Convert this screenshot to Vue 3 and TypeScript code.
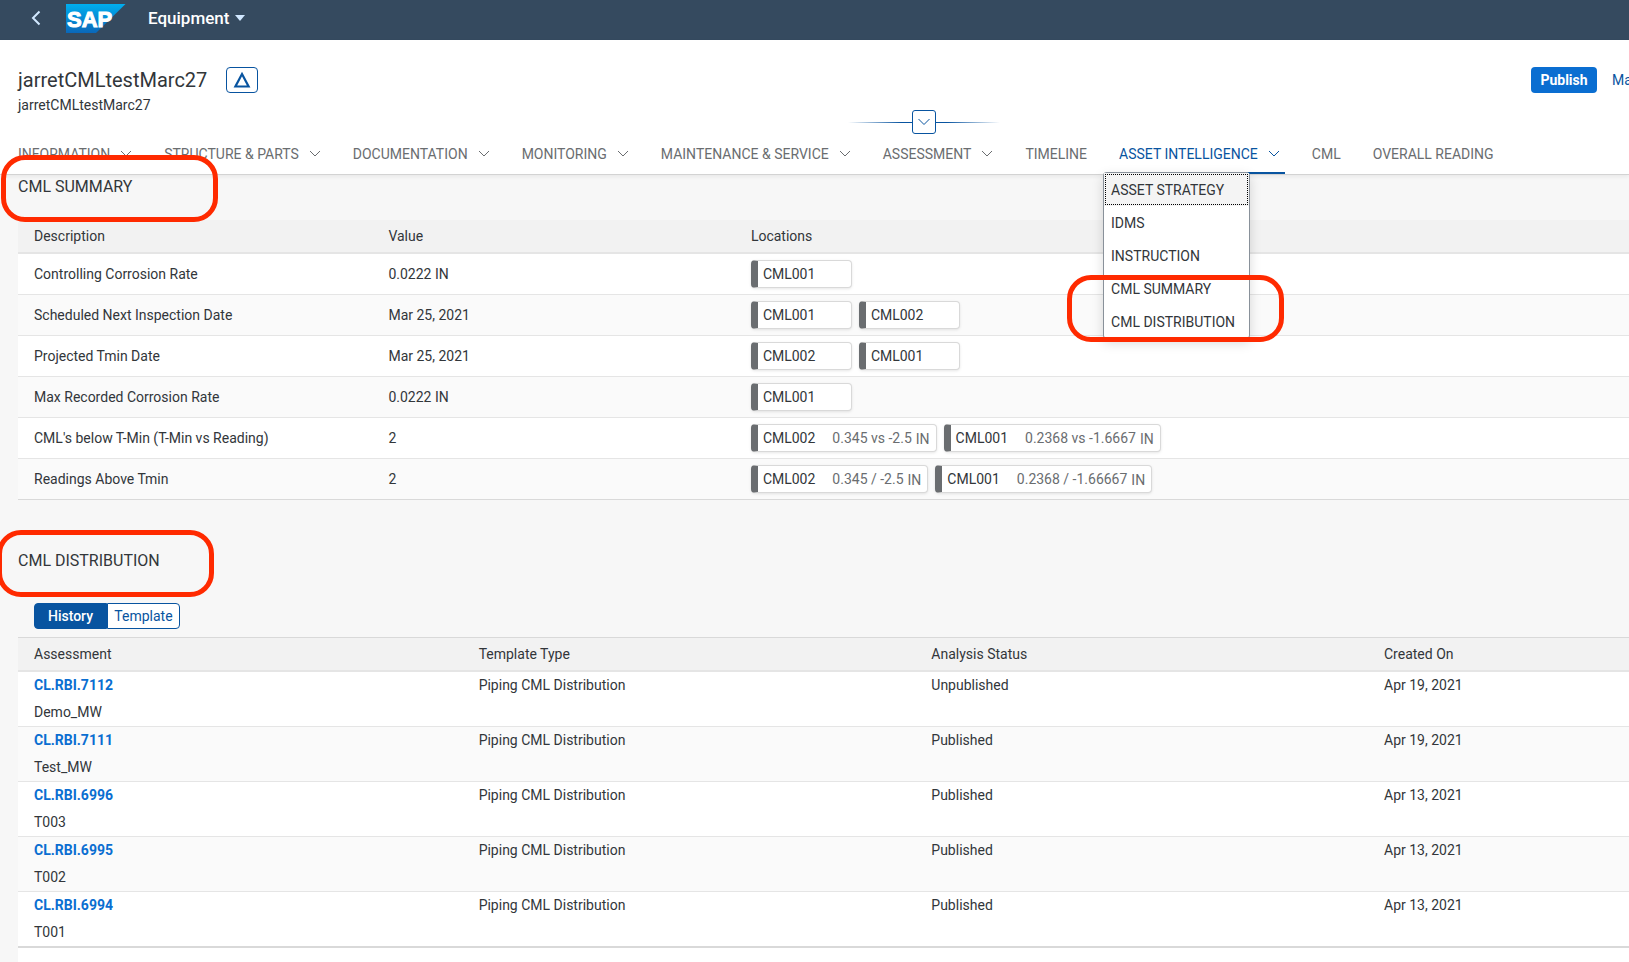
<script setup lang="ts">
import { ref } from 'vue'

interface Tab { label: string; menu?: boolean; active?: boolean }
interface Tag { id: string; detail?: string; unit?: string }
interface SummaryRow { description: string; value: string; tags: Tag[] }
interface Assessment { id: string; name: string; status: string; created: string }

const tabs: Tab[] = [
  { label: 'INFORMATION', menu: true },
  { label: 'STRUCTURE & PARTS', menu: true },
  { label: 'DOCUMENTATION', menu: true },
  { label: 'MONITORING', menu: true },
  { label: 'MAINTENANCE & SERVICE', menu: true },
  { label: 'ASSESSMENT', menu: true },
  { label: 'TIMELINE' },
  { label: 'ASSET INTELLIGENCE', menu: true, active: true },
  { label: 'CML' },
  { label: 'OVERALL READING' },
]

const menuItems: string[] = ['ASSET STRATEGY', 'IDMS', 'INSTRUCTION', 'CML SUMMARY', 'CML DISTRIBUTION']

const summary: SummaryRow[] = [
  { description: 'Controlling Corrosion Rate', value: '0.0222 IN', tags: [{ id: 'CML001' }] },
  { description: 'Scheduled Next Inspection Date', value: 'Mar 25, 2021', tags: [{ id: 'CML001' }, { id: 'CML002' }] },
  { description: 'Projected Tmin Date', value: 'Mar 25, 2021', tags: [{ id: 'CML002' }, { id: 'CML001' }] },
  { description: 'Max Recorded Corrosion Rate', value: '0.0222 IN', tags: [{ id: 'CML001' }] },
  {
    description: "CML's below T-Min (T-Min vs Reading)", value: '2',
    tags: [{ id: 'CML002', detail: '0.345 vs -2.5', unit: 'IN' }, { id: 'CML001', detail: '0.2368 vs -1.6667', unit: 'IN' }],
  },
  {
    description: 'Readings Above Tmin', value: '2',
    tags: [{ id: 'CML002', detail: '0.345 / -2.5', unit: 'IN' }, { id: 'CML001', detail: '0.2368 / -1.66667', unit: 'IN' }],
  },
]

const assessments: Assessment[] = [
  { id: 'CL.RBI.7112', name: 'Demo_MW', status: 'Unpublished', created: 'Apr 19, 2021' },
  { id: 'CL.RBI.7111', name: 'Test_MW', status: 'Published', created: 'Apr 19, 2021' },
  { id: 'CL.RBI.6996', name: 'T003', status: 'Published', created: 'Apr 13, 2021' },
  { id: 'CL.RBI.6995', name: 'T002', status: 'Published', created: 'Apr 13, 2021' },
  { id: 'CL.RBI.6994', name: 'T001', status: 'Published', created: 'Apr 13, 2021' },
]

const view = ref<'History' | 'Template'>('History')
</script>

<template>
  <div class="page">
    <header class="shell">
      <button class="back" type="button" aria-label="Back">
        <svg width="10" height="16" viewBox="0 0 10 16"><path d="M8.500 1.500 2 8l6.500 6.500" fill="none" stroke="#d1e8ff" stroke-width="2" /></svg>
      </button>
      <svg class="logo" width="60" height="30" viewBox="0 0 60 30" role="img" aria-label="SAP">
        <defs>
          <linearGradient id="logo-fill" x1="0" y1="0" x2="0" y2="1">
            <stop offset="0" stop-color="#00aeef" />
            <stop offset="1" stop-color="#0a67b9" />
          </linearGradient>
        </defs>
        <path d="M0 1h59.500L30 30H0z" fill="url(#logo-fill)" />
        <text x="1" y="24" class="logo-text">SAP</text>
      </svg>
      <button class="app-title" type="button">
        Equipment
        <svg width="10" height="6" viewBox="0 0 10 6"><path d="M0 0h10L5 6z" fill="#d1e8ff" /></svg>
      </button>
    </header>

    <section class="object-header">
      <div class="title-row">
        <h1>jarretCMLtestMarc27</h1>
        <button class="alert" type="button" aria-label="Alerts">
          <svg width="18" height="18" viewBox="0 0 18 18"><path d="M9 3 15.600 15.500H2.400z" fill="none" stroke="#0854a0" stroke-width="2.200" /></svg>
        </button>
        <div class="actions">
          <button class="publish" type="button">Publish</button>
          <button class="more" type="button">Ma</button>
        </div>
      </div>
      <p class="subtitle">jarretCMLtestMarc27</p>

      <div class="expander">
        <button type="button" aria-label="Expand header">
          <svg width="14" height="8" viewBox="0 0 14 8"><path d="M1.500 1 7 6.500 12.500 1" fill="none" stroke="#0854a0" /></svg>
        </button>
      </div>

      <nav class="tabs">
        <div v-for="tab in tabs" :key="tab.label" class="tab" :class="{ active: tab.active }">
          <button type="button">
            {{ tab.label }}
            <svg v-if="tab.menu" width="12" height="8" viewBox="0 0 12 8"><path d="M1 1l5 5 5-5" fill="none" stroke="currentColor" /></svg>
          </button>
          <div v-if="tab.active" class="menu">
            <button v-for="item in menuItems" :key="item" type="button">{{ item }}</button>
            <span class="mark mark-menu"></span>
          </div>
        </div>
      </nav>
    </section>

    <main>
      <section class="summary">
        <h2>CML SUMMARY<span class="mark mark-summary"></span></h2>
        <table>
          <thead>
            <tr><th class="s-desc">Description</th><th class="s-value">Value</th><th>Locations</th></tr>
          </thead>
          <tbody>
            <tr v-for="row in summary" :key="row.description">
              <td>{{ row.description }}</td>
              <td>{{ row.value }}</td>
              <td>
                <div class="tags">
                  <span v-for="tag in row.tags" :key="tag.id" class="tag">
                    <span>{{ tag.id }}</span>
                    <span v-if="tag.detail" class="detail">{{ tag.detail }}</span>
                    <span v-if="tag.unit" class="unit">{{ tag.unit }}</span>
                  </span>
                </div>
              </td>
            </tr>
          </tbody>
        </table>
      </section>

      <section class="distribution">
        <h2>CML DISTRIBUTION<span class="mark mark-distribution"></span></h2>
        <div class="segments">
          <button type="button" :class="{ on: view === 'History' }" @click="view = 'History'">History</button>
          <button type="button" :class="{ on: view === 'Template' }" @click="view = 'Template'">Template</button>
        </div>
        <table>
          <thead>
            <tr><th class="d-name">Assessment</th><th class="d-col">Template Type</th><th class="d-col">Analysis Status</th><th>Created On</th></tr>
          </thead>
          <tbody>
            <tr v-for="item in assessments" :key="item.id">
              <td><a href="#">{{ item.id }}</a><div class="name">{{ item.name }}</div></td>
              <td>Piping CML Distribution</td>
              <td>{{ item.status }}</td>
              <td>{{ item.created }}</td>
            </tr>
          </tbody>
        </table>
        <div class="rest"></div>
      </section>
    </main>
  </div>
</template>

<style>
body {
  background: #f7f7f7;
}
</style>

<style scoped>
.page {
  display: flex;
  flex-direction: column;
  min-height: 100vh;
  overflow: hidden;
  background: #f7f7f7;
  color: #32363a;
  font: 14px/20px Roboto, "Liberation Sans", sans-serif;
}
button {
  margin: 0;
  padding: 0;
  border: 0;
  background: none;
  color: inherit;
  font: inherit;
  cursor: pointer;
  white-space: nowrap;
}
svg {
  display: block;
  flex: none;
}
h1, h2, p {
  margin: 0;
  font-weight: 400;
}

.shell {
  display: flex;
  flex: none;
  align-items: center;
  box-sizing: border-box;
  height: 40px;
  padding: 0 0 4px 31px;
  background: #354a5f;
}
.logo {
  margin: 0 22px 0 25px;
}
.logo-text {
  fill: #fff;
  stroke: #fff;
  stroke-width: 1px;
  font: 700 22px "Liberation Sans", sans-serif;
}
.app-title {
  display: flex;
  align-items: center;
  gap: 6px;
  color: #fff;
  font-size: 17px;
  font-weight: 500;
}

.object-header {
  position: relative;
  z-index: 2;
  flex: none;
  padding: 27px 0 0 18px;
  background: #fff;
  border-bottom: 1px solid #d3d3d3;
  box-shadow: 0 2px 4px rgba(0, 0, 0, 0.06);
}
.title-row {
  display: flex;
  align-items: center;
  height: 26px;
}
h1 {
  font-size: 20px;
  line-height: 26px;
}
.alert {
  display: grid;
  place-items: center;
  width: 32px;
  height: 26px;
  margin-left: 19px;
  border: 1px solid #0854a0;
  border-radius: 4px;
}
.actions {
  display: flex;
  gap: 15px;
  margin-left: auto;
}
.publish {
  width: 66px;
  height: 26px;
  border-radius: 4px;
  background: #0a6ed1;
  color: #fff;
  font-weight: 700;
}
.more {
  width: 17px;
  color: #0854a0;
  text-align: left;
}
.subtitle {
  margin-top: 2px;
}
.expander {
  position: absolute;
  top: 70px;
  left: calc(56.700% - 76px);
  display: flex;
  justify-content: center;
  width: 152px;
  background: linear-gradient(90deg, transparent, #0854a0 35%, #0854a0 65%, transparent) center / 100% 1px no-repeat;
}
.expander button {
  display: grid;
  place-items: center;
  width: 24px;
  height: 24px;
  border: 1px solid #0854a0;
  border-radius: 3px;
  background: #fff;
}
.tabs {
  display: flex;
  gap: 32px;
  margin-top: 23px;
  color: #6a6d70;
}
.tab {
  position: relative;
  height: 36px;
}
.tab > button {
  display: flex;
  align-items: center;
  gap: 10px;
  height: 32px;
}
.tab.active {
  color: #0854a0;
}
.tab.active::after {
  content: "";
  position: absolute;
  right: -5px;
  bottom: 0;
  left: -2px;
  height: 2px;
  background: #0854a0;
}
.menu {
  position: absolute;
  z-index: 1;
  top: 34px;
  left: -16px;
  display: flex;
  flex-direction: column;
  width: 147px;
  box-sizing: border-box;
  border: 1px solid #89919a;
  border-bottom-color: #d9d9d9;
  border-radius: 4px;
  background: #fff;
  box-shadow: 0 4px 12px rgba(0, 0, 0, 0.15);
  color: #32363a;
}
.menu button {
  height: 33px;
  padding-left: 7px;
  text-align: left;
}
.menu button:first-child {
  background: #f4f4f4;
  outline: 1px dotted #000;
  outline-offset: -2px;
}
.mark {
  position: absolute;
  box-sizing: border-box;
  width: 217px;
  height: 67px;
  border: 5px solid #ff2a00;
  border-radius: 24px;
  pointer-events: none;
}
.mark-menu {
  right: -35px;
  bottom: -4px;
}
.mark-summary {
  top: -20px;
  left: -17px;
}
.mark-distribution {
  top: -19px;
  left: -21px;
}

main {
  display: flex;
  flex: 1;
  flex-direction: column;
  padding-left: 18px;
}
h2 {
  position: relative;
  z-index: 3;
  font-size: 16px;
  line-height: 24px;
}
.summary h2 {
  margin-bottom: 21px;
}
.distribution {
  display: flex;
  flex: 1;
  flex-direction: column;
  margin-top: 49px;
}
table {
  width: 100%;
  border-spacing: 0;
  table-layout: fixed;
}
th {
  box-sizing: border-box;
  height: 34px;
  padding: 0 16px;
  background: #f2f2f2;
  border-bottom: 2px solid #e5e5e5;
  font-weight: 400;
  text-align: left;
}
td {
  box-sizing: border-box;
  padding: 0 16px;
  background: #fff;
  border-bottom: 1px solid #e5e5e5;
}
tbody tr:nth-child(even) td {
  background: #fafafa;
}
tbody tr:last-child td {
  border-bottom-color: #d9d9d9;
}
.s-desc {
  width: 22%;
}
.s-value {
  width: 22.500%;
}
.summary td {
  height: 41px;
}
.tags {
  display: flex;
  gap: 7px;
}
.tag {
  display: flex;
  align-items: center;
  box-sizing: border-box;
  min-width: 101px;
  height: 28px;
  padding: 0 6px 0 5px;
  border: 1px solid #d9d9d9;
  border-left: 7px solid #6a6d70;
  border-radius: 4px;
  background: #fff;
  box-shadow: 0 1px 3px rgba(0, 0, 0, 0.1);
}
.detail {
  margin-left: 17px;
  color: #6a6d70;
}
.unit {
  margin-left: 4px;
  padding-top: 2px;
  color: #6a6d70;
}
.segments {
  display: flex;
  align-self: flex-start;
  margin: 30px 0 8px 16px;
}
.segments button {
  box-sizing: border-box;
  width: 73px;
  height: 26px;
  border: 1px solid #0854a0;
  background: #fff;
  color: #0854a0;
}
.segments button:first-child {
  border-radius: 4px 0 0 4px;
}
.segments button:last-child {
  border-radius: 0 4px 4px 0;
}
.segments .on {
  background: #0854a0;
  color: #fff;
  font-weight: 500;
}
.distribution th {
  height: 35px;
  border-top: 1px solid #d9d9d9;
}
.distribution td {
  height: 55px;
  padding-top: 3px;
  vertical-align: top;
}
.distribution tbody tr:last-child td {
  height: 56px;
  border-bottom-width: 2px;
}
.d-name {
  width: 27.600%;
}
.d-col {
  width: 28.100%;
}
a {
  color: #0a6ed1;
  font-weight: 700;
  text-decoration: none;
}
.name {
  margin-top: 7px;
}
.rest {
  flex: 1;
  background: #fff;
}
</style>
